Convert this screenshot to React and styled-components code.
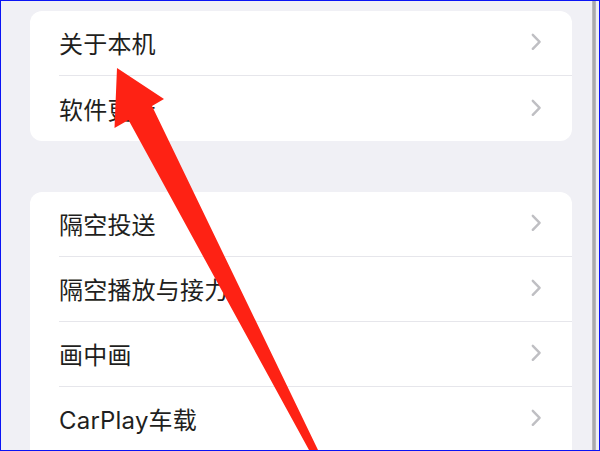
import React from "react";
import styled, { createGlobalStyle } from "styled-components";

const Global = createGlobalStyle`
  html, body { margin: 0; padding: 0; background: #ffffff; }
  #root { width: 600px; height: 451px; }
`;

const Frame = styled.div`
  position: relative;
  width: 600px;
  height: 451px;
  box-sizing: border-box;
  border: 1px solid #0a14f5;
  overflow: hidden;
  display: flex;
  font-family: "Inter", "Noto Sans CJK SC", sans-serif;
`;

const Screen = styled.div`
  flex: 1;
  background: #f0f0f5;
  padding: 10px 19px 0 29px;
  display: flex;
  flex-direction: column;
  gap: 51px;
`;

const Edge = styled.div`
  width: 7px;
  flex: none;
  background: linear-gradient(
    to right,
    #c9c9cd 0px,
    #a9a9ad 1px,
    #a9a9ad 3px,
    #c5c5c9 4px,
    #ececf0 4px,
    #f2f2f6 7px
  );
`;

const Card = styled.div`
  background: #ffffff;
  border-radius: 12px;
  width: 542px;
  flex: none;
  overflow: hidden;
  min-height: ${(p) => (p.$open ? "270px" : "auto")};
`;

const Row = styled.div`
  height: 65px;
  padding-left: 29px;
  box-sizing: border-box;
  display: flex;
`;

const RowBody = styled.div`
  flex: 1;
  display: flex;
  align-items: center;
  justify-content: space-between;
  padding: 4px 30px 0 0;
  box-sizing: border-box;
  border-bottom: ${(p) => (p.$last ? "none" : "1px solid #e6e6eb")};
`;

const Label = styled.span`
  font-size: 24px;
  line-height: 1;
  color: #1f1f21;
  letter-spacing: 0.2px;
`;

const Chevron = () => (
  <svg width="11" height="18" viewBox="0 0 11 18" style={{ marginTop: "-6px" }}>
    <polyline
      points="1.8,1.8 8.6,8.8 1.8,15.8"
      fill="none"
      stroke="#bfbfc3"
      strokeWidth="2.4"
      strokeLinecap="round"
      strokeLinejoin="round"
    />
  </svg>
);

const ArrowLayer = styled.svg`
  position: absolute;
  left: -1px;
  top: -1px;
  width: 600px;
  height: 451px;
  pointer-events: none;
`;

const groups = [
  { open: false, items: ["关于本机", "软件更新"] },
  { open: true, items: ["隔空投送", "隔空播放与接力", "画中画", "CarPlay车载"] },
];

export default function App() {
  return (
    <>
      <Global />
      <Frame>
        <Screen>
          {groups.map((g, gi) => (
            <Card key={gi} $open={g.open}>
              {g.items.map((t, i) => (
                <Row key={t}>
                  <RowBody $last={!g.open && i === g.items.length - 1}>
                    <Label>{t}</Label>
                    <Chevron />
                  </RowBody>
                </Row>
              ))}
            </Card>
          ))}
        </Screen>
        <Edge />
        <ArrowLayer viewBox="0 0 600 451">
          <polygon
            points="117,68 164,99 152,106 318,450 309,450 128.5,120 114.5,128"
            fill="#fe2214"
          />
        </ArrowLayer>
      </Frame>
    </>
  );
}
